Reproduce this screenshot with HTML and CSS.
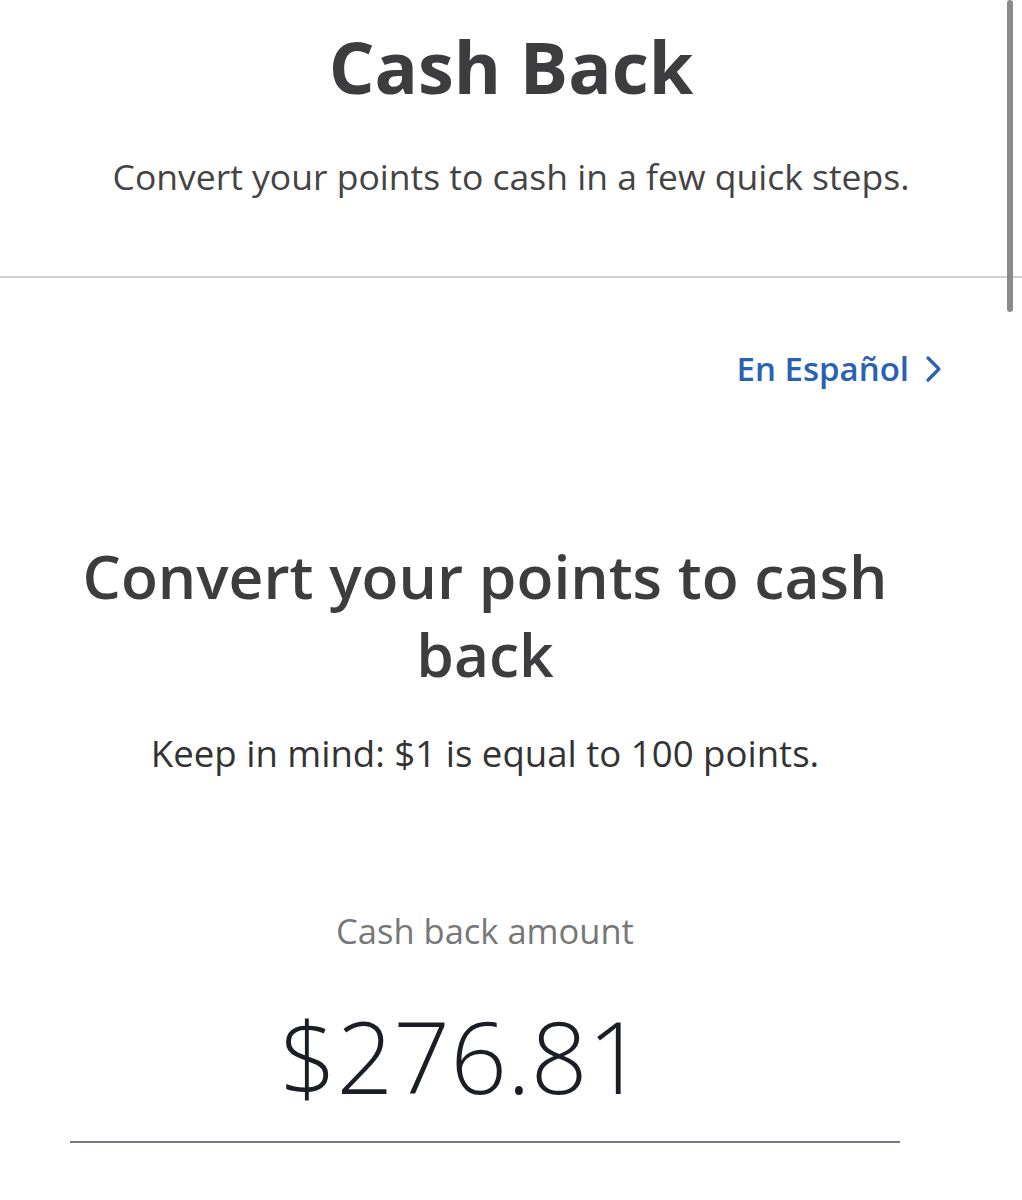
FILE: index.html
```html
<!DOCTYPE html>
<html lang="en">
<head>
  <meta charset="UTF-8" />
  <title>Cash Back</title>
  <link rel="stylesheet" href="styles.css">
</head>
<body>

<header class="page-head">
  <h1>Cash Back</h1>
  <p>Convert your points to cash in a few quick steps.</p>
</header>

<div class="lang-row">
  <a class="lang-link" href="#">En Español
    <svg width="18" height="28" viewBox="0 0 18 28"><path d="M4 3 L15 14 L4 25" fill="none" stroke="currentColor" stroke-width="3.2" stroke-linecap="round" stroke-linejoin="round"/></svg>
  </a>
</div>

<main class="convert">
  <h2>Convert your points to cash back</h2>
  <p class="note">Keep in mind: $1 is equal to 100 points.</p>

  <label class="amount-label">Cash back amount</label>
  <div class="amount">$276.81</div>
</main>

<div class="scroll-thumb"></div>

</body>
</html>
```

FILE: styles.css
```css
body {
  font-family: 'Open Sans', sans-serif;
  margin: 0; padding: 0;
  background: #fff;
  color: #3d3d40;
  width: 1022px;
  overflow: hidden;
}
.page-head {
  text-align: center;
  border-bottom: 2px solid #cfcfcf;
  padding: 16px 0 76px;
}
.page-head h1 {
  margin: 0;
  font-size: 72px;
  font-weight: 700;
  line-height: 100px;
  color: #3d3d40;
}
.page-head p {
  margin: 36px 0 0;
  font-size: 35.5px;
  line-height: 48px;
  color: #444;
}
.lang-row {
  display: flex;
  justify-content: flex-end;
  padding: 68px 80px 0 0;
}
.lang-link {
  display: flex;
  align-items: center;
  gap: 15px;
  color: #2a62b3;
  text-decoration: none;
  font-size: 33px;
  font-weight: 600;
}
.convert {
  width: 830px;
  margin: 146px 0 0 70px;
  text-align: center;
}
.convert h2 {
  margin: 0;
  font-size: 60.5px;
  font-weight: 600;
  line-height: 78px;
  color: #3d3d40;
}
.note {
  margin: 35px 0 0;
  font-size: 36.6px;
  color: #333;
}
.amount-label {
  display: block;
  margin-top: 129px;
  font-size: 34.5px;
  color: #777;
}
.amount {
  margin-top: 34px;
  padding: 0 46px 18px 0;
  font-size: 99.5px;
  font-weight: 300;
  color: #1b1f25;
  border-bottom: 2px solid #6f7b88;
}
.scroll-thumb {
  position: absolute;
  top: 0;
  right: 9px;
  width: 6px;
  height: 312px;
  border-radius: 3px;
  background: #8a8a8a;
}
```
